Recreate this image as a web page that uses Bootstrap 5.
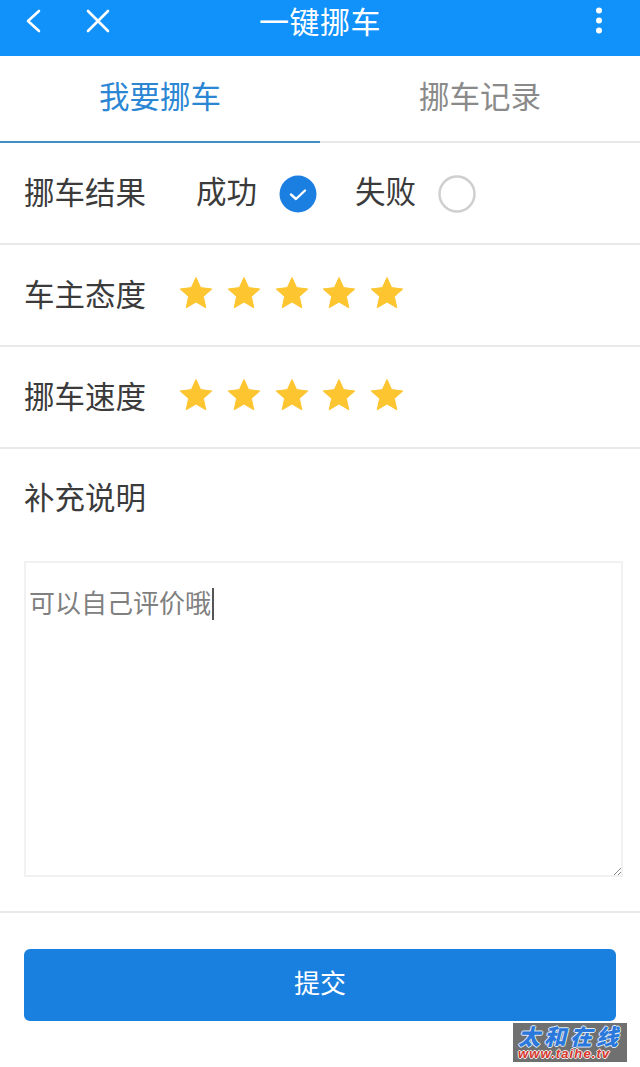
<!DOCTYPE html>
<html lang="zh-CN">

<head>
    <meta charset="UTF-8" />
    <meta name="viewport" content="width=device-width, initial-scale=1.0" />
    <title>一键挪车</title>
    <link href="https://cdn.jsdelivr.net/npm/bootstrap@5.3.0/dist/css/bootstrap.min.css" rel="stylesheet" />
    <style>
        body {
            font-family: "Noto Sans CJK SC", "Liberation Sans", sans-serif;
            color: #3b3b3b;
            background: #fff;
            position: relative;
            height: 1067px;
            overflow: hidden;
        }

        .top-bar {
            height: 56px;
            background-color: #1192fb;
            color: #fff;
            font-size: 30.5px;
            line-height: 1;
            padding-bottom: 16px;
        }

        .bar-title {
            font-size: 30px;
            letter-spacing: .5px;
        }

        .bar-left {
            left: 26px;
            top: 9px;
            gap: 44px;
        }

        .bar-more {
            right: 37px;
            top: 7px;
        }

        .tab-bar {
            height: 87px;
        }

        .tab-item {
            font-size: 30.5px;
            line-height: 1;
            padding-top: 24px;
            color: #8a8a8a;
            border-bottom: 2px solid #e8e8e8;
        }

        .tab-item.on {
            color: #2b86d3;
            border-bottom-color: #3f8fc4;
        }

        .form-line {
            height: 102px;
            padding-left: 24px;
            border-bottom: 2px solid #e9e9e9;
            font-size: 30.5px;
            line-height: 1;
        }

        .line-label {
            width: 122px;
            margin-top: -4px;
        }

        .pick-text {
            margin-top: -6px;
        }

        .star-list {
            margin-left: 34px;
            gap: 15.8px;
            margin-top: -4px;
        }

        .pick-a {
            margin-left: 50px;
        }

        .pick-b {
            margin-left: 38px;
        }

        .pick-dot {
            margin-left: 22px;
            margin-top: 2px;
        }

        .note-label {
            padding: 32px 0 0 24px;
            font-size: 30.5px;
            line-height: 1;
            height: 112px;
        }

        .note-wrap {
            padding-left: 24px;
            padding-right: 17px;
            padding-bottom: 34px;
            border-bottom: 2px solid #e9e9e9;
        }

        .note-box {
            height: 316px;
            border: 2px solid #f1f1f1;
            border-radius: 0;
            font-size: 26px;
            line-height: 1.2;
            padding: 23px 3px;
            color: #808080;
        }

        .note-text {
            position: relative;
        }

        .caret-line {
            display: inline-block;
            width: 2px;
            height: 32px;
            background: #555;
            margin-left: 1px;
            vertical-align: -7px;
        }

        .grip-mark {
            right: 1px;
            bottom: 1px;
        }

        .send-wrap {
            padding: 36px 24px 0;
        }

        .send-btn {
            height: 72px;
            background-color: #1a80e0;
            border: 0;
            border-radius: 6px;
            font-size: 26px;
            color: #fff;
            padding: 0 0 7px;
        }

        .mark-box {
            left: 513px;
            top: 1023px;
            width: 114px;
            height: 39px;
            background: #707070;
            line-height: 1;
            padding-left: 5px;
        }

        .mark-top {
            color: #2a78dc;
            font-size: 22px;
            font-weight: 900;
            font-style: italic;
            letter-spacing: 4px;
            height: 24px;
            line-height: 24px;
            white-space: nowrap;
            text-shadow: -1px 0 #dfe9f5, 1px 0 #dfe9f5, 0 -1px #dfe9f5, 0 1px #dfe9f5;
        }

        .mark-sub {
            color: #d8352b;
            font-family: "Liberation Sans", sans-serif;
            font-size: 13px;
            line-height: 14px;
            font-weight: 700;
            font-style: italic;
            letter-spacing: 1.1px;
            white-space: nowrap;
            text-shadow: -1px 0 #eee, 1px 0 #eee, 0 -1px #eee, 0 1px #eee;
        }
    </style>
</head>

<body class="m-0">
    <div class="top-bar d-flex align-items-center justify-content-center position-relative">
        <div class="bar-left d-flex position-absolute">
            <svg width="16" height="24" viewBox="0 0 16 24" fill="none" stroke="#fff" stroke-width="2.6" stroke-linecap="round" stroke-linejoin="round"><path d="M13 2 2 12l11 10"/></svg>
            <svg width="24" height="24" viewBox="0 0 24 24" fill="none" stroke="#fff" stroke-width="2.6" stroke-linecap="round"><path d="M2 2l20 20M22 2 2 22"/></svg>
        </div>
        <span class="bar-title">一键挪车</span>
        <svg class="bar-more position-absolute" width="8" height="28" viewBox="0 0 8 28" fill="#fff"><circle cx="4" cy="3.5" r="3"/><circle cx="4" cy="13.5" r="3"/><circle cx="4" cy="23.5" r="3"/></svg>
    </div>

    <div class="tab-bar d-flex">
        <div class="tab-item on w-50 text-center">我要挪车</div>
        <div class="tab-item w-50 text-center">挪车记录</div>
    </div>

    <div class="form-line d-flex align-items-center">
        <div class="line-label">挪车结果</div>
        <div class="pick-text pick-a">成功</div>
        <svg class="pick-dot" width="38" height="38" viewBox="0 0 38 38"><circle cx="19" cy="19" r="18.5" fill="#1a7fe0"/><path d="M12 19.5l5 4.5 9-8.5" fill="none" stroke="#fff" stroke-width="2.4" stroke-linecap="round" stroke-linejoin="round"/></svg>
        <div class="pick-text pick-b">失败</div>
        <svg class="pick-dot" width="38" height="38" viewBox="0 0 38 38"><circle cx="19" cy="19" r="17.5" fill="#fff" stroke="#cfcfcf" stroke-width="2.5"/></svg>
    </div>

    <div class="form-line d-flex align-items-center">
        <div class="line-label">车主态度</div>
        <div class="star-list d-flex" data-stars></div>
    </div>

    <div class="form-line d-flex align-items-center">
        <div class="line-label">挪车速度</div>
        <div class="star-list d-flex" data-stars></div>
    </div>

    <div class="note-label">补充说明</div>
    <div class="note-wrap">
        <div class="note-text">
            <div class="form-control note-box">可以自己评价哦<span class="caret-line"></span></div>
            <svg class="grip-mark position-absolute" width="10" height="10" viewBox="0 0 10 10" stroke="#888" stroke-width="1"><path d="M2 9 9 2M6 9l3-3"/></svg>
        </div>
    </div>

    <div class="send-wrap">
        <button type="button" class="btn send-btn w-100">提交</button>
    </div>

    <div class="mark-box position-absolute">
        <div class="mark-top">太和在线</div>
        <div class="mark-sub">www.taihe.tv</div>
    </div>

    <script src="https://cdn.jsdelivr.net/npm/bootstrap@5.3.0/dist/js/bootstrap.bundle.min.js"></script>
    <script>
        const starSvg = '<svg width="32" height="32" viewBox="0 0 32 32"><path d="M16 0.5 20.6 10.6 31.8 12 23.4 19.5 25.8 30.8 16 25 6.2 30.8 8.6 19.5 0.2 12 11.4 10.6Z" fill="#fdc530" stroke="#fdc530" stroke-linejoin="round"/></svg>';
        document.querySelectorAll("[data-stars]").forEach(box => {
            box.innerHTML = starSvg.repeat(5);
        });
    </script>
</body>

</html>
